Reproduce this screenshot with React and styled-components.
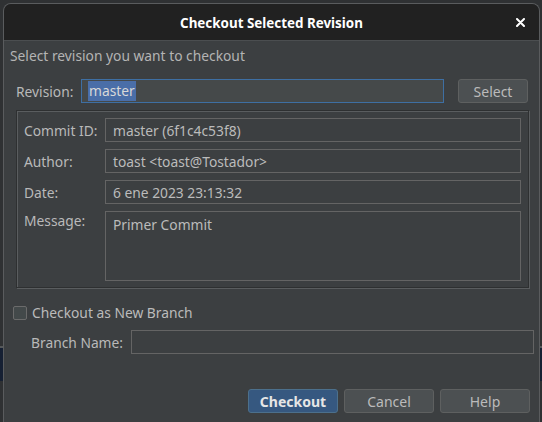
import React from "react";
import styled, { createGlobalStyle } from "styled-components";

const GlobalStyle = createGlobalStyle`
  html, body {
    margin: 0;
    padding: 0;
    background: #2d2f31;
  }
  * {
    box-sizing: border-box;
  }
`;

const Screen = styled.div`
  display: flex;
  width: 542px;
  height: 422px;
  padding: 3px 2px 0 3px;
  overflow: hidden;
  font-family: "Noto Sans", "DejaVu Sans", sans-serif;
  background: linear-gradient(
    to bottom,
    #2f3133 0,
    #2f3133 346px,
    #55585a 346px,
    #55585a 348px,
    #162033 348px,
    #162033 381px,
    #2f3133 381px
  );
`;

const Dialog = styled.div`
  flex: 1;
  display: flex;
  flex-direction: column;
  background: #3c3f41;
  border: 1px solid #5a5c5e;
  border-bottom: none;
  border-radius: 8px 8px 0 0;
  overflow: hidden;
`;

const TitleBar = styled.div`
  display: grid;
  grid-template-columns: 1fr auto 1fr;
  align-items: center;
  height: 37px;
  background: #212121;
  border-bottom: 1px solid #4b4e50;
`;

const Title = styled.div`
  grid-column: 2;
  color: #ffffff;
  font-size: 13.4px;
  font-weight: 700;
  padding-top: 1px;
`;

const CloseButton = styled.div`
  justify-self: end;
  display: flex;
  align-items: center;
  justify-content: center;
  width: 20px;
  height: 20px;
  margin-right: 9px;
`;

const Body = styled.div`
  display: flex;
  flex-direction: column;
  flex: 1;
  color: #bbbbbb;
  font-size: 13.8px;
`;

const Intro = styled.div`
  margin: 6px 0 0 6px;
  line-height: 18px;
  color: #b4b4b4;
`;

const Row = styled.div`
  display: flex;
  align-items: center;
  flex: ${(p) => (p.$grow ? 1 : "none")};
  margin: ${(p) => p.$margin || "0"};
  gap: ${(p) => p.$gap || "0"};
`;

const Label = styled.div`
  width: ${(p) => p.$width};
  flex-shrink: 0;
  color: #b9b9b9;
  white-space: nowrap;
`;

const TextInput = styled.div`
  flex: 1;
  height: 24px;
  display: flex;
  align-items: center;
  padding-left: ${(p) => p.$pad || "6px"};
  background: ${(p) => (p.$focused ? "#45494a" : "#3c3f41")};
  border: 1px solid ${(p) => (p.$focused ? "#3e6fa3" : "#646464")};
  color: #bbbbbb;
`;

const Selected = styled.span`
  background: #4a6ea8;
  color: #d8d8d8;
  padding: 0 1px;
  line-height: 20px;
`;

const Button = styled.div`
  width: ${(p) => p.$width || "90px"};
  height: 24px;
  display: flex;
  align-items: center;
  justify-content: center;
  border-radius: 3px;
  background: ${(p) => (p.$primary ? "#365880" : "#4c5052")};
  border: 1px solid ${(p) => (p.$primary ? "#4c708c" : "#5e6060")};
  color: ${(p) => (p.$primary ? "#e6e6e6" : "#bbbbbb")};
  font-weight: ${(p) => (p.$primary ? 700 : 400)};
  font-size: 14px;
`;

const InfoPanel = styled.div`
  display: flex;
  flex-direction: column;
  gap: 7px;
  height: 178px;
  margin: 7px 10px 0 12px;
  padding: 7px 7px 6px 7px;
  border: 1px solid #2e3031;
  box-shadow: 1px 1px 0 #5a5d5f, inset 1px 1px 0 #5a5d5f;
`;

const InfoRow = styled.div`
  display: flex;
  align-items: ${(p) => (p.$top ? "flex-start" : "center")};
  flex: ${(p) => (p.$grow ? 1 : "none")};
`;

const InfoField = styled.div`
  flex: 1;
  height: ${(p) => (p.$grow ? "100%" : "24px")};
  display: flex;
  align-items: ${(p) => (p.$grow ? "flex-start" : "center")};
  padding: ${(p) => (p.$grow ? "3px 7px" : "0 7px")};
  border: 1px solid #646464;
  color: #bbbbbb;
`;

const CheckRow = styled.label`
  display: flex;
  align-items: center;
  gap: 5px;
  margin: 17px 0 0 9px;
  height: 15px;
`;

const CheckBox = styled.span`
  width: 14px;
  height: 14px;
  border: 1px solid #6b6b6b;
  border-radius: 2px;
  background: #43494a;
`;

const Footer = styled.div`
  display: flex;
  justify-content: flex-end;
  gap: 6px;
  margin: auto 9px 9px 0;
`;

const CloseIcon = () => (
  <svg width="9" height="9" viewBox="0 0 9 9">
    <path d="M1 1L8 8M8 1L1 8" stroke="#ffffff" strokeWidth="2" strokeLinecap="round" />
  </svg>
);

const details = [
  { label: "Commit ID:", value: "master (6f1c4c53f8)" },
  { label: "Author:", value: "toast <toast@Tostador>" },
  { label: "Date:", value: "6 ene 2023 23:13:32" },
];

export default function App() {
  return (
    <Screen>
      <GlobalStyle />
      <Dialog>
        <TitleBar>
          <Title>Checkout Selected Revision</Title>
          <CloseButton>
            <CloseIcon />
          </CloseButton>
        </TitleBar>
        <Body>
          <Intro>Select revision you want to checkout</Intro>
          <Row $margin="14px 11px 0 12px" $gap="14px">
            <Row $grow>
              <Label $width="65px">Revision:</Label>
              <TextInput $focused $pad="6px">
                <Selected>master</Selected>
              </TextInput>
            </Row>
            <Button $width="70px">Select</Button>
          </Row>
          <InfoPanel>
            {details.map((d) => (
              <InfoRow key={d.label}>
                <Label $width="81px">{d.label}</Label>
                <InfoField>{d.value}</InfoField>
              </InfoRow>
            ))}
            <InfoRow $top $grow>
              <Label $width="81px">Message:</Label>
              <InfoField $grow>Primer Commit</InfoField>
            </InfoRow>
          </InfoPanel>
          <CheckRow>
            <CheckBox />
            <span>Checkout as New Branch</span>
          </CheckRow>
          <Row $margin="10px 5px 0 27px">
            <Label $width="100px">Branch Name:</Label>
            <TextInput />
          </Row>
          <Footer>
            <Button $primary>Checkout</Button>
            <Button>Cancel</Button>
            <Button>Help</Button>
          </Footer>
        </Body>
      </Dialog>
    </Screen>
  );
}
